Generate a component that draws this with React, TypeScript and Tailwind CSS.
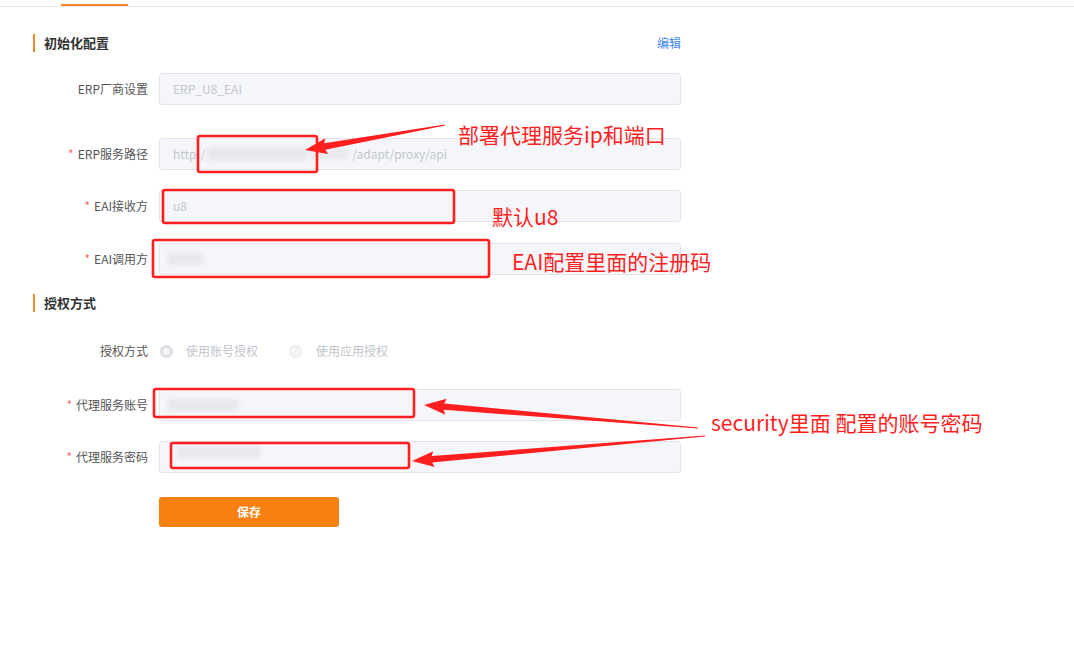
import React from "react";

const font = { fontFamily: '"Noto Sans CJK SC","Liberation Sans",sans-serif' };

function Arrow({ tx, ty, px, py }: { tx: number; ty: number; px: number; py: number }) {
  const dx = px - tx, dy = py - ty;
  const len = Math.hypot(dx, dy);
  const ux = dx / len, uy = dy / len;
  const nx = -uy, ny = ux;
  const headLen = 20, headW = 8, shaftW = 3.2, tailW = 0.6;
  const bx = px - ux * headLen, by = py - uy * headLen;
  const pts = [
    [tx + nx * tailW, ty + ny * tailW],
    [bx + nx * shaftW, by + ny * shaftW],
    [bx + nx * headW - ux * 2, by + ny * headW - uy * 2],
    [px, py],
    [bx - nx * headW - ux * 2, by - ny * headW - uy * 2],
    [bx - nx * shaftW, by - ny * shaftW],
    [tx - nx * tailW, ty - ny * tailW],
  ];
  return <polygon points={pts.map((p) => p.join(",")).join(" ")} fill="#ff1f1f" />;
}

function Label({ text, req }: { text: string; req?: boolean }) {
  return (
    <div className="w-[115px] shrink-0 text-right text-[12px] text-[#555]">
      {req && <span className="text-[#f56c6c] mr-[4px]">*</span>}
      {text}
    </div>
  );
}

function Input({ children }: { children?: React.ReactNode }) {
  return (
    <div className="ml-[11px] w-[522px] h-[32px] rounded-[3px] border border-[#e2e4ea] bg-[#f5f6fa] flex items-center pl-[13px] text-[12px] text-[#c3c6cd] relative">
      {children}
    </div>
  );
}

function Blur({ w, h = 12 }: { w: number; h?: number }) {
  return <span className="inline-block bg-[#e6e8ec] rounded-[4px] blur-[2px]" style={{ width: w, height: h }} />;
}

function Header({ text, right }: { text: string; right?: string }) {
  return (
    <div className="flex items-center h-[18px] w-[648px]">
      <div className="w-[2px] h-[18px] bg-[#f5862b]" />
      <div className="ml-[9px] text-[13px] font-bold text-[#333]">{text}</div>
      {right && <div className="ml-auto text-[12px] text-[#3f88f0]">{right}</div>}
    </div>
  );
}

const annot = { fontFamily: '"Noto Sans CJK SC",sans-serif' };

export default function App() {
  return (
    <div className="relative w-[1074px] h-[656px] bg-white overflow-hidden" style={font}>
      <div className="h-[7px] pt-[4px] border-b border-[#e8e8e8]">
        <div className="ml-[61px] w-[67px] h-[2px] bg-[#f5862b]" />
      </div>
      <div className="pl-[33px]">
        <div className="pt-[27px]">
          <Header text="初始化配置" right="编辑" />
        </div>
        <div className="mt-[21px] flex items-center">
          <Label text="ERP厂商设置" />
          <Input>ERP_U8_EAI</Input>
        </div>
        <div className="mt-[33px] flex items-center">
          <Label text="ERP服务路径" req />
          <Input>
            <span>http</span>
            <span className="ml-[4px]">/</span>
            <span className="ml-[2px] flex items-center gap-[2px]">
              <Blur w={100} h={14} />
              <Blur w={40} h={10} />
            </span>
            <span className="ml-[3px]">/adapt/proxy/api</span>
          </Input>
        </div>
        <div className="mt-[20px] flex items-center">
          <Label text="EAI接收方" req />
          <Input>u8</Input>
        </div>
        <div className="mt-[21px] flex items-center">
          <Label text="EAI调用方" req />
          <Input>
            <span className="-ml-[6px] flex items-center">
              <Blur w={36} h={12} />
            </span>
          </Input>
        </div>
        <div className="mt-[19px]">
          <Header text="授权方式" />
        </div>
        <div className="mt-[23px] flex items-center h-[32px]">
          <Label text="授权方式" />
          <div className="ml-[12px] flex items-center text-[12px] text-[#c0c4cc]">
            <span className="w-[13px] h-[13px] rounded-full border-[3px] border-[#dcdee4] bg-[#f3f4f7]" />
            <span className="ml-[13px]">使用账号授权</span>
            <span className="ml-[31px] w-[13px] h-[13px] rounded-full border border-[#e2e4ea] bg-[#f3f4f7]" />
            <span className="ml-[14px]">使用应用授权</span>
          </div>
        </div>
        <div className="mt-[22px] flex items-center">
          <Label text="代理服务账号" req />
          <Input>
            <span className="-ml-[6px] flex items-center">
              <Blur w={72} h={12} />
            </span>
          </Input>
        </div>
        <div className="mt-[20px] flex items-center">
          <Label text="代理服务密码" req />
          <Input>
            <span className="ml-[4px] -mt-[10px] flex items-center">
              <Blur w={84} h={12} />
            </span>
          </Input>
        </div>
        <div className="mt-[24px] flex">
          <div className="ml-[126px] w-[180px] h-[30px] rounded-[3px] bg-[#f88010] flex items-center justify-center text-[12px] text-white font-bold">
            保存
          </div>
        </div>
      </div>

      {/* annotations */}
      <svg className="absolute left-0 top-0 pointer-events-none" width={1074} height={656}>
        <g fill="none" stroke="#ff1f1f" strokeWidth={2.6}>
          <rect x={198} y={136} width={119} height={36} rx={2} />
          <rect x={163} y={190} width={291} height={33} rx={2} />
          <rect x={153} y={240} width={336} height={37} rx={2} />
          <rect x={154} y={389} width={260} height={28} rx={2} />
          <rect x={171} y={443} width={238} height={25} rx={2} />
        </g>
        <Arrow tx={445} ty={125} px={305} py={150} />
        <Arrow tx={698} ty={428} px={424} py={405} />
        <Arrow tx={705} ty={436} px={412} py={461} />
      </svg>
      <div className="absolute left-[458px] top-[120px] text-[21px] leading-[28px] text-[#ff1f1f] whitespace-nowrap" style={annot}>
        部署代理服务ip和端口
      </div>
      <div className="absolute left-[492px] top-[202px] text-[21px] leading-[28px] text-[#ff1f1f] whitespace-nowrap" style={annot}>
        默认u8
      </div>
      <div className="absolute left-[512px] top-[247px] text-[21px] leading-[28px] text-[#ff1f1f] whitespace-nowrap" style={annot}>
        EAI配置里面的注册码
      </div>
      <div className="absolute left-[711px] top-[408px] text-[21px] leading-[28px] text-[#ff1f1f] whitespace-nowrap" style={annot}>
        security里面 配置的账号密码
      </div>
    </div>
  );
}
